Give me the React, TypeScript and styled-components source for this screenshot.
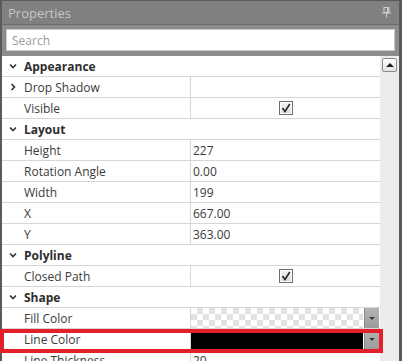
import React from 'react';
import styled, { createGlobalStyle, css } from 'styled-components';

const GlobalStyle = createGlobalStyle`
  html, body {
    margin: 0;
    padding: 0;
    background: #ffffff;
  }
  body {
    font-family: 'Open Sans', 'Noto Sans', sans-serif;
  }
`;

const Panel = styled.div`
  width: 402px;
  height: 361px;
  box-sizing: border-box;
  background: #5a5a5a;
  padding: 1px 3px 0 2px;
  display: flex;
  flex-direction: column;
  overflow: hidden;
  position: relative;
`;

const TitleBar = styled.div`
  height: 23px;
  flex: 0 0 23px;
  background: #808080;
  color: #c6c6c6;
  font-size: 13px;
  display: flex;
  align-items: center;
  justify-content: space-between;
  padding: 0 8px 0 6px;
  border-bottom: 1px solid #6c6c6c;
`;

const SearchArea = styled.div`
  background: #8c8c8c;
  padding: 4px 4px 5px 4px;
`;

const SearchBox = styled.input`
  display: block;
  width: 100%;
  height: 22px;
  box-sizing: border-box;
  border: 1px solid #c9c9c9;
  background: #ffffff;
  font-family: inherit;
  font-size: 12px;
  color: #333;
  padding: 0 5px;
  outline: none;
  &::placeholder {
    color: #9a9a9a;
  }
`;

const Body = styled.div`
  flex: 1;
  display: flex;
  min-height: 0;
`;

const Grid = styled.div`
  flex: 1;
  background: #ffffff;
  overflow: hidden;
`;

const Row = styled.div<{ $header?: boolean }>`
  height: 20px;
  border-bottom: 1px solid #d6d6d6;
  display: flex;
  align-items: stretch;
  font-size: 12px;
  color: ${(p) => (p.$header ? '#2e2e2e' : '#3a3a3a')};
  font-weight: ${(p) => (p.$header ? 700 : 400)};
`;

const NameCell = styled.div<{ $full?: boolean }>`
  width: ${(p) => (p.$full ? 'auto' : '188px')};
  flex: ${(p) => (p.$full ? 1 : '0 0 188px')};
  display: flex;
  align-items: center;
  white-space: nowrap;
  ${(p) =>
    !p.$full &&
    css`
      border-right: 1px solid #d6d6d6;
    `}
`;

const Toggle = styled.span`
  width: 22px;
  flex: 0 0 22px;
  display: flex;
  align-items: center;
  justify-content: center;
  color: #333;
`;

const ValueCell = styled.div<{ $center?: boolean }>`
  flex: 1;
  display: flex;
  align-items: center;
  justify-content: ${(p) => (p.$center ? 'center' : 'flex-start')};
  padding-left: ${(p) => (p.$center ? '0' : '2px')};
  white-space: nowrap;
`;

const CheckBox = styled.span`
  width: 14px;
  height: 14px;
  box-sizing: border-box;
  border: 1px solid #707070;
  background: linear-gradient(#f4f4f4, #dcdcdc);
  display: flex;
  align-items: center;
  justify-content: center;
  box-shadow: inset 0 0 0 1px #ffffff;
`;

const ColorValue = styled.div`
  flex: 1;
  display: flex;
  align-items: stretch;
  height: 100%;
  padding-right: 1px;
`;

const Swatch = styled.div<{ $color?: string }>`
  width: 172px;
  ${(p) =>
    p.$color
      ? css`
          background: ${p.$color};
          margin: 4px 0 0 0;
        `
      : css`
          background-color: #ffffff;
          background-image: conic-gradient(
            #e2e2e2 25%,
            #ffffff 0 50%,
            #e2e2e2 0 75%,
            #ffffff 0
          );
          background-size: 12px 12px;
        `}
`;

const DropButton = styled.div`
  width: 14px;
  margin-left: auto;
  background: linear-gradient(#b4b4b4, #9c9c9c);
  border-left: 1px solid #8a8a8a;
  display: flex;
  align-items: center;
  justify-content: center;
  &::after {
    content: '';
    border-left: 3px solid transparent;
    border-right: 3px solid transparent;
    border-top: 3px solid #3a3a3a;
  }
`;

const Scrollbar = styled.div`
  width: 19px;
  flex: 0 0 19px;
  background: #ececec;
  display: flex;
  flex-direction: column;
  align-items: center;
  padding-top: 2px;
`;

const ScrollButton = styled.div`
  width: 15px;
  height: 14px;
  box-sizing: border-box;
  border: 1px solid #8a8a8a;
  border-radius: 2px;
  background: linear-gradient(#ffffff, #e4e4e4);
  display: flex;
  align-items: center;
  justify-content: center;
  &::after {
    content: '';
    border-left: 4px solid transparent;
    border-right: 4px solid transparent;
    border-bottom: 4px solid #1e1e1e;
  }
`;

const Highlight = styled.div`
  position: absolute;
  left: 0;
  top: 329px;
  width: 383px;
  height: 24px;
  box-sizing: border-box;
  border: 4px solid #e3202a;
  pointer-events: none;
`;

const Chevron = ({ open }: { open: boolean }) => (
  <svg width="8" height="8" viewBox="0 0 8 8">
    {open ? (
      <path d="M1 2.5 L4 5.5 L7 2.5" fill="none" stroke="#333" strokeWidth="1.6" />
    ) : (
      <path d="M2.5 1 L5.5 4 L2.5 7" fill="none" stroke="#333" strokeWidth="1.6" />
    )}
  </svg>
);

const Check = () => (
  <svg width="10" height="10" viewBox="0 0 10 10">
    <path d="M1.5 5 L4 8.5 L8.8 1" fill="none" stroke="#2a2a2a" strokeWidth="1.6" />
  </svg>
);

const Pin = () => (
  <svg width="9" height="11" viewBox="0 0 9 11">
    <rect x="2" y="0.5" width="5" height="5" fill="none" stroke="#d0d0d0" strokeWidth="1" />
    <rect x="5" y="1" width="1.5" height="4" fill="#d0d0d0" />
    <rect x="0" y="5.5" width="9" height="1" fill="#d0d0d0" />
    <rect x="4" y="6.5" width="1" height="4" fill="#d0d0d0" />
  </svg>
);

type Prop =
  | { kind: 'header'; name: string }
  | { kind: 'text'; name: string; value: string; expandable?: boolean }
  | { kind: 'check'; name: string }
  | { kind: 'color'; name: string; color?: string };

const props: Prop[] = [
  { kind: 'header', name: 'Appearance' },
  { kind: 'text', name: 'Drop Shadow', value: '', expandable: true },
  { kind: 'check', name: 'Visible' },
  { kind: 'header', name: 'Layout' },
  { kind: 'text', name: 'Height', value: '227' },
  { kind: 'text', name: 'Rotation Angle', value: '0.00' },
  { kind: 'text', name: 'Width', value: '199' },
  { kind: 'text', name: 'X', value: '667.00' },
  { kind: 'text', name: 'Y', value: '363.00' },
  { kind: 'header', name: 'Polyline' },
  { kind: 'check', name: 'Closed Path' },
  { kind: 'header', name: 'Shape' },
  { kind: 'color', name: 'Fill Color' },
  { kind: 'color', name: 'Line Color', color: '#000000' },
  { kind: 'text', name: 'Line Thickness', value: '20' },
];

const PropertyRow = ({ item }: { item: Prop }) => {
  if (item.kind === 'header') {
    return (
      <Row $header>
        <NameCell $full>
          <Toggle>
            <Chevron open />
          </Toggle>
          {item.name}
        </NameCell>
      </Row>
    );
  }
  return (
    <Row>
      <NameCell>
        <Toggle>{item.kind === 'text' && item.expandable && <Chevron open={false} />}</Toggle>
        {item.name}
      </NameCell>
      {item.kind === 'text' && <ValueCell>{item.value}</ValueCell>}
      {item.kind === 'check' && (
        <ValueCell $center>
          <CheckBox>
            <Check />
          </CheckBox>
        </ValueCell>
      )}
      {item.kind === 'color' && (
        <ColorValue>
          <Swatch $color={item.color} />
          <DropButton />
        </ColorValue>
      )}
    </Row>
  );
};

export default function App() {
  return (
    <>
      <GlobalStyle />
      <Panel>
        <TitleBar>
          <span>Properties</span>
          <Pin />
        </TitleBar>
        <SearchArea>
          <SearchBox placeholder="Search" />
        </SearchArea>
        <Body>
          <Grid>
            {props.map((item) => (
              <PropertyRow key={item.name} item={item} />
            ))}
          </Grid>
          <Scrollbar>
            <ScrollButton />
          </Scrollbar>
        </Body>
        <Highlight />
      </Panel>
    </>
  );
}
